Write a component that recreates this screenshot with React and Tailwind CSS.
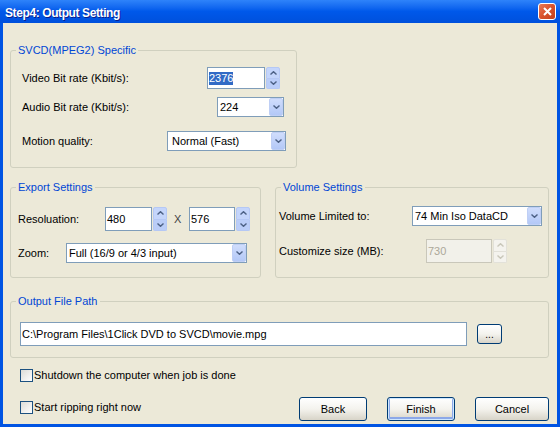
import React from 'react';

const Chevron = ({ up, color = '#4D6185' }) => (
  <svg width="7" height="4" viewBox="0 0 7 4">
    <path
      d={up ? 'M0.5 3.5 L3.5 0.7 L6.5 3.5' : 'M0.5 0.5 L3.5 3.3 L6.5 0.5'}
      fill="none"
      stroke={color}
      strokeWidth="1.4"
    />
  </svg>
);

const Spin = ({ h, disabled }) => (
  <div className={`ml-px w-[14px] ${h} flex flex-col shrink-0`}>
    <div
      className={`flex-1 rounded-t-[2px] border flex items-center justify-center ${
        disabled ? 'bg-[#F4F3EE] border-[#E2E1D9]' : 'bg-[#C4D5FB] border-[#B5C8F5]'
      }`}
    >
      <Chevron up color={disabled ? '#C9C7BA' : '#4D6185'} />
    </div>
    <div
      className={`flex-1 rounded-b-[2px] border border-t-0 flex items-center justify-center ${
        disabled ? 'bg-[#F4F3EE] border-[#E2E1D9]' : 'bg-[#BACDF8] border-[#B5C8F5]'
      }`}
    >
      <Chevron color={disabled ? '#C9C7BA' : '#4D6185'} />
    </div>
  </div>
);

const Combo = ({ value, w, pl }) => (
  <div className={`${w} h-[20px] bg-white border border-[#7F9DB9] flex items-center shrink-0`}>
    <span className={`flex-1 ${pl} whitespace-nowrap overflow-hidden`}>{value}</span>
    <div className="w-[14px] h-[18px] rounded-[2px] bg-linear-to-b from-[#D0DDFC] to-[#B3C8F7] border border-[#BFCFF5] flex items-center justify-center">
      <Chevron />
    </div>
  </div>
);

const Group = ({ title, className, children }) => (
  <fieldset className={`border border-[#D0D0BF] rounded-[3px] ${className}`}>
    <legend className="ml-[5px] px-[2px] text-[#0046D5] leading-[13px]">{title}</legend>
    {children}
  </fieldset>
);

const XpButton = ({ children, w, h = 'h-[24px]', primary }) => (
  <button
    className={`${w} ${h} rounded-[3px] border border-[#003C74] bg-linear-to-b from-white via-[#F4F3EE] to-[#D8D4C8] text-black ${
      primary ? 'shadow-[inset_0_0_0_1px_#CEE7FF,inset_0_-1px_0_2px_#8CA8E8]' : ''
    }`}
  >
    {children}
  </button>
);

const Check = ({ label }) => (
  <div className="flex items-center">
    <div className="w-[13px] h-[13px] border border-[#1C5180] bg-linear-to-br from-[#DCDCD7] to-white" />
    <span className="ml-[1px] leading-[13px]">{label}</span>
  </div>
);

export default function App() {
  return (
    <div className="w-[560px] h-[427px] bg-[#0054E3] flex flex-col font-['Liberation_Sans',Arial,sans-serif] text-[11px] text-black">
      {/* title bar */}
      <div className="h-[23px] shrink-0 bg-linear-to-b from-[#2E83FA] via-[#0058EA] to-[#0050DC] flex items-center">
        <span className="ml-[5px] pt-[2px] text-white font-bold text-[12px] tracking-[-0.4px] [text-shadow:1px_1px_#0A1E8C]">
          Step4: Output Setting
        </span>
        <div className="ml-auto mr-[4px] w-[18px] h-[17px] rounded-[3px] border border-white bg-linear-to-br from-[#E97A57] via-[#D9522B] to-[#C2401C] flex items-center justify-center">
          <svg width="9" height="9" viewBox="0 0 9 9">
            <path d="M1 1 L8 8 M8 1 L1 8" stroke="white" strokeWidth="2" />
          </svg>
        </div>
      </div>

      {/* body */}
      <div className="flex-1 mx-[3px] mb-[3px] bg-[#ECE9D8] pt-[21px] pl-[7px] pr-[8px] flex flex-col">
        <Group title="SVCD(MPEG2) Specific" className="w-[287px] pb-[16px]">
          <div className="mt-[10px] h-[22px] flex items-center">
            <span className="pl-[11px]">Video Bit rate (Kbit/s):</span>
            <div className="ml-auto mr-[16px] flex">
              <div className="w-[58px] h-[22px] bg-white border border-[#7F9DB9] flex items-center pl-px">
                <span className="bg-[#316AC5] text-white leading-[13px]">2376</span>
              </div>
              <Spin h="h-[22px]" />
            </div>
          </div>
          <div className="mt-[8px] h-[20px] flex items-center">
            <span className="pl-[11px]">Audio Bit rate (Kbit/s):</span>
            <div className="ml-auto mr-[12px]">
              <Combo value="224" w="w-[67px]" pl="pl-[2px]" />
            </div>
          </div>
          <div className="mt-[14px] h-[20px] flex items-center">
            <span className="pl-[11px]">Motion quality:</span>
            <div className="ml-auto mr-[10px]">
              <Combo value="Normal (Fast)" w="w-[119px]" pl="pl-[4px]" />
            </div>
          </div>
        </Group>

        <div className="mt-[13px] flex gap-[14px]">
          <Group title="Export Settings" className="w-[251px] pb-[14px]">
            <div className="mt-[13px] h-[24px] flex items-center pl-[7px]">
              <span className="w-[87px] shrink-0">Resoluation:</span>
              <div className="w-[47px] h-[24px] bg-white border border-[#7F9DB9] flex items-center pl-px">480</div>
              <Spin h="h-[24px]" />
              <span className="ml-[7px] w-[8px] text-[#444]">X</span>
              <div className="ml-[7px] w-[46px] h-[24px] bg-white border border-[#7F9DB9] flex items-center pl-px">576</div>
              <Spin h="h-[24px]" />
            </div>
            <div className="mt-[12px] h-[20px] flex items-center pl-[7px]">
              <span className="w-[48px] shrink-0">Zoom:</span>
              <Combo value="Full (16/9 or 4/3 input)" w="w-[181px]" pl="pl-[2px]" />
            </div>
          </Group>

          <Group title="Volume Settings" className="w-[274px] pb-[14px]">
            <div className="mt-[12px] h-[20px] flex items-center pl-[3px]">
              <span className="w-[133px] shrink-0">Volume Limited to:</span>
              <Combo value="74 Min Iso DataCD" w="w-[130px]" pl="pl-[2px]" />
            </div>
            <div className="mt-[13px] h-[24px] flex items-center pl-[3px]">
              <span className="w-[147px] shrink-0">Customize size (MB):</span>
              <div className="w-[66px] h-[24px] bg-[#F2F1EA] border border-[#C9C7BA] text-[#ACA899] flex items-center pl-px">730</div>
              <Spin h="h-[24px]" disabled />
            </div>
          </Group>
        </div>

        <Group title="Output File Path" className="mt-[17px] pb-[11px]">
          <div className="mt-[14px] h-[24px] flex items-center pl-[9px]">
            <div className="w-[447px] h-[24px] bg-white border border-[#7F9DB9] flex items-center pl-px whitespace-nowrap">
              C:\Program Files\1Click DVD to SVCD\movie.mpg
            </div>
            <div className="ml-[10px]">
              <XpButton w="w-[25px]" h="h-[20px]">
                <span className="text-[10px] leading-none">...</span>
              </XpButton>
            </div>
          </div>
        </Group>

        <div className="mt-[11px] ml-[10px]">
          <Check label="Shutdown the computer when job is done" />
        </div>

        <div className="mt-[15px] flex items-start">
          <div className="ml-[10px] mt-[4px]">
            <Check label="Start ripping right now" />
          </div>
          <div className="ml-auto flex gap-[20px]">
            <XpButton w="w-[68px]">Back</XpButton>
            <XpButton w="w-[68px]" primary>Finish</XpButton>
            <XpButton w="w-[74px]">Cancel</XpButton>
          </div>
        </div>
      </div>
    </div>
  );
}
